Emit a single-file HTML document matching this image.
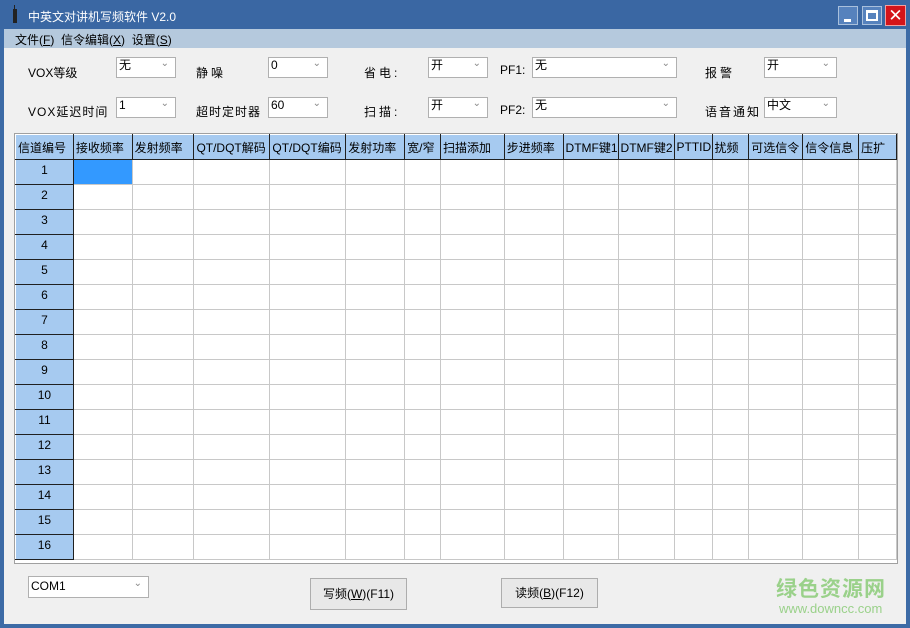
<!DOCTYPE html>
<html><head><meta charset="utf-8"><style>
*{margin:0;padding:0;box-sizing:border-box}
body{width:910px;height:628px;overflow:hidden;background:#3d6ba6;font-family:"Liberation Sans","Noto Sans CJK SC",sans-serif;font-size:12px;color:#000;position:relative}
.abs{position:absolute}
#title{left:0;top:0;width:910px;height:29px;background:#3a67a3;color:#fff;font-size:12px}
#menu{left:4px;top:29px;width:902px;height:19px;background:#b5c9dd}
#client{left:4px;top:48px;width:902px;height:576px;background:#f0f0f0}
.lbl{position:absolute;font-size:12px;white-space:nowrap}
.sp{letter-spacing:3px}
.cb{position:absolute;height:21px;background:#fff;border:1px solid #b0b0b0;font-size:12px;padding-left:2px;line-height:15px}
.cb:after{content:"⌄";position:absolute;right:6px;top:-2px;color:#888;font-size:10px}
.btn{position:absolute;background:#e8e8e8;border:1px solid #adadad;text-align:center;font-size:12px}
#grid{left:14px;top:133px;width:884px;height:431px;background:#fff;border:1px solid #a0a0a0}
table{border-collapse:collapse;table-layout:fixed;position:absolute;left:0;top:0}
td{height:25px;border:1px solid #c8c8c8;padding:0;font-size:12px;text-align:center;white-space:nowrap;overflow:hidden}
td.h{background:#a6caf0;border:1px solid #fff;border-right:1px solid #202020;border-bottom:1px solid #202020;text-align:left;padding-left:2px}
td.r{background:#a6caf0;border:1px solid #fff;border-right:1px solid #202020;border-bottom:1px solid #202020;vertical-align:top;padding-top:3px}
</style></head><body>
<div id="title" class="abs">
 <div class="abs" style="left:13px;top:9px;width:4px;height:14px;background:#222"></div>
 <div class="abs" style="left:14px;top:5px;width:1px;height:5px;background:#222"></div>
 <div class="abs" style="left:28px;top:8px">中英文对讲机写频软件 V2.0</div>
 <div class="abs" style="left:838px;top:6px;width:20px;height:19px;background:#5682bd;border:1px solid #a9c0dc"><div class="abs" style="left:5px;top:12px;width:7px;height:3px;background:#fff"></div></div>
 <div class="abs" style="left:862px;top:6px;width:20px;height:19px;background:#5682bd;border:1px solid #a9c0dc"><div class="abs" style="left:3px;top:3px;width:12px;height:11px;border:2px solid #fff;border-top-width:3px"></div></div>
 <div class="abs" style="left:885px;top:5px;width:21px;height:21px;background:#d4141a;border:1px solid #f0a0a0;color:#fff;font-size:17px;text-align:center;line-height:19px">✕</div>
</div>
<div id="menu" class="abs"><span class="abs" style="left:11px;top:2px">文件(<u>F</u>)&nbsp;&nbsp;信令编辑(<u>X</u>)&nbsp;&nbsp;设置(<u>S</u>)</span></div>
<div id="client" class="abs"></div>

<div class="lbl" style="left:28px;top:64px">VOX等级</div>
<div class="cb" style="left:116px;top:57px;width:60px">无</div>
<div class="lbl sp" style="left:196px;top:64px">静噪</div>
<div class="cb" style="left:268px;top:57px;width:60px">0</div>
<div class="lbl sp" style="left:364px;top:64px">省电:</div>
<div class="cb" style="left:428px;top:57px;width:60px">开</div>
<div class="lbl" style="left:500px;top:63px">PF1:</div>
<div class="cb" style="left:532px;top:57px;width:145px">无</div>
<div class="lbl sp" style="left:705px;top:64px">报警</div>
<div class="cb" style="left:764px;top:57px;width:73px">开</div>

<div class="lbl" style="left:28px;top:103px;letter-spacing:1px">VOX延迟时间</div>
<div class="cb" style="left:116px;top:97px;width:60px">1</div>
<div class="lbl" style="left:196px;top:103px;letter-spacing:1px">超时定时器</div>
<div class="cb" style="left:268px;top:97px;width:60px">60</div>
<div class="lbl sp" style="left:364px;top:103px">扫描:</div>
<div class="cb" style="left:428px;top:97px;width:60px">开</div>
<div class="lbl" style="left:500px;top:103px">PF2:</div>
<div class="cb" style="left:532px;top:97px;width:145px">无</div>
<div class="lbl" style="left:705px;top:103px;letter-spacing:2px">语音通知</div>
<div class="cb" style="left:764px;top:97px;width:73px">中文</div>

<div id="grid" class="abs">
<table>
<colgroup><col style="width:58px"><col style="width:59px"><col style="width:62px"><col style="width:76px"><col style="width:76px"><col style="width:59px"><col style="width:36px"><col style="width:64px"><col style="width:59px"><col style="width:55px"><col style="width:56px"><col style="width:38px"><col style="width:37px"><col style="width:54px"><col style="width:56px"><col style="width:38px"></colgroup>
<tr><td class="h">信道编号</td><td class="h">接收频率</td><td class="h">发射频率</td><td class="h">QT/DQT解码</td><td class="h">QT/DQT编码</td><td class="h">发射功率</td><td class="h">宽/窄</td><td class="h">扫描添加</td><td class="h">步进频率</td><td class="h">DTMF键1</td><td class="h">DTMF键2</td><td class="h">PTTID</td><td class="h">扰频</td><td class="h">可选信令</td><td class="h">信令信息</td><td class="h">压扩</td></tr>
<tr><td class="r">1</td><td style="background:#3399ff;border:1px dotted #c08060"></td><td></td><td></td><td></td><td></td><td></td><td></td><td></td><td></td><td></td><td></td><td></td><td></td><td></td><td></td></tr>
<tr><td class="r">2</td><td></td><td></td><td></td><td></td><td></td><td></td><td></td><td></td><td></td><td></td><td></td><td></td><td></td><td></td><td></td></tr>
<tr><td class="r">3</td><td></td><td></td><td></td><td></td><td></td><td></td><td></td><td></td><td></td><td></td><td></td><td></td><td></td><td></td><td></td></tr>
<tr><td class="r">4</td><td></td><td></td><td></td><td></td><td></td><td></td><td></td><td></td><td></td><td></td><td></td><td></td><td></td><td></td><td></td></tr>
<tr><td class="r">5</td><td></td><td></td><td></td><td></td><td></td><td></td><td></td><td></td><td></td><td></td><td></td><td></td><td></td><td></td><td></td></tr>
<tr><td class="r">6</td><td></td><td></td><td></td><td></td><td></td><td></td><td></td><td></td><td></td><td></td><td></td><td></td><td></td><td></td><td></td></tr>
<tr><td class="r">7</td><td></td><td></td><td></td><td></td><td></td><td></td><td></td><td></td><td></td><td></td><td></td><td></td><td></td><td></td><td></td></tr>
<tr><td class="r">8</td><td></td><td></td><td></td><td></td><td></td><td></td><td></td><td></td><td></td><td></td><td></td><td></td><td></td><td></td><td></td></tr>
<tr><td class="r">9</td><td></td><td></td><td></td><td></td><td></td><td></td><td></td><td></td><td></td><td></td><td></td><td></td><td></td><td></td><td></td></tr>
<tr><td class="r">10</td><td></td><td></td><td></td><td></td><td></td><td></td><td></td><td></td><td></td><td></td><td></td><td></td><td></td><td></td><td></td></tr>
<tr><td class="r">11</td><td></td><td></td><td></td><td></td><td></td><td></td><td></td><td></td><td></td><td></td><td></td><td></td><td></td><td></td><td></td></tr>
<tr><td class="r">12</td><td></td><td></td><td></td><td></td><td></td><td></td><td></td><td></td><td></td><td></td><td></td><td></td><td></td><td></td><td></td></tr>
<tr><td class="r">13</td><td></td><td></td><td></td><td></td><td></td><td></td><td></td><td></td><td></td><td></td><td></td><td></td><td></td><td></td><td></td></tr>
<tr><td class="r">14</td><td></td><td></td><td></td><td></td><td></td><td></td><td></td><td></td><td></td><td></td><td></td><td></td><td></td><td></td><td></td></tr>
<tr><td class="r">15</td><td></td><td></td><td></td><td></td><td></td><td></td><td></td><td></td><td></td><td></td><td></td><td></td><td></td><td></td><td></td></tr>
<tr><td class="r">16</td><td></td><td></td><td></td><td></td><td></td><td></td><td></td><td></td><td></td><td></td><td></td><td></td><td></td><td></td><td></td></tr>
</table>
</div>

<div class="cb" style="left:28px;top:576px;width:121px;height:22px;line-height:18px">COM1</div>
<div class="btn" style="left:310px;top:578px;width:97px;height:32px;line-height:30px">写频(<u>W</u>)(F11)</div>
<div class="btn" style="left:501px;top:578px;width:97px;height:30px;line-height:28px">读频(<u>B</u>)(F12)</div>
<div class="lbl" style="left:776px;top:573px;font-size:21px;font-weight:bold;color:#9ad18a;letter-spacing:1px">绿色资源网</div>
<div class="lbl" style="left:779px;top:601px;font-size:13px;color:#9ad18a">www.downcc.com</div>
</body></html>
